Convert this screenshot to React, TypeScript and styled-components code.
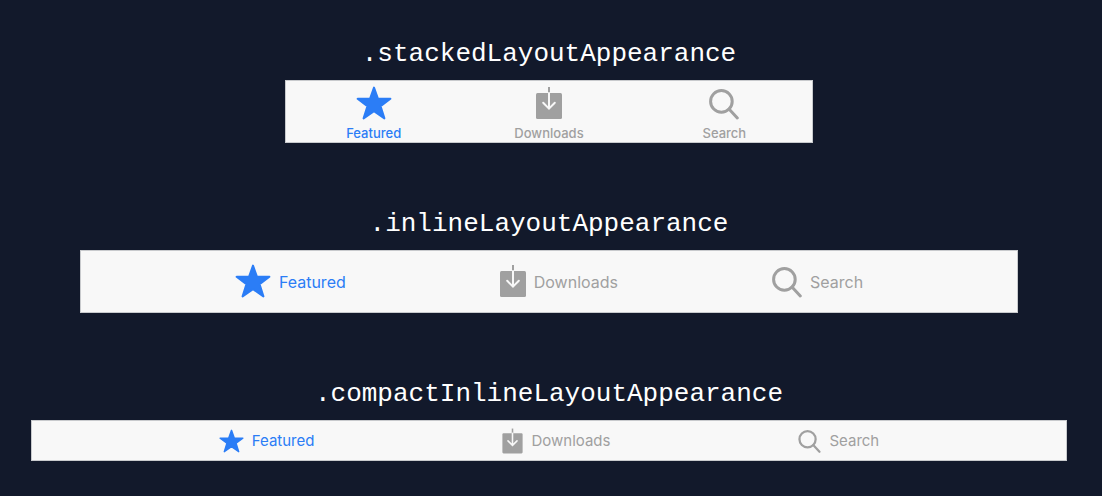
import React from "react";
import styled, { createGlobalStyle } from "styled-components";

type Variant = "stacked" | "inline" | "compact";

const GlobalStyle = createGlobalStyle`
  body {
    margin: 0;
    background: #12192b;
  }
`;

const Page = styled.main`
  display: flex;
  flex-direction: column;
  gap: 61px;
  padding: 34px 35px 35px 31px;
`;

const Section = styled.section`
  display: flex;
  flex-direction: column;
  align-items: center;
  gap: 6px;
`;

const Heading = styled.h2`
  margin: 0;
  color: #ffffff;
  font: 400 26px/40px "Liberation Mono", monospace;
`;

const barWidths = { stacked: 528, inline: 938, compact: 1036 };
const itemGaps = { stacked: 0, inline: 154, compact: 188 };

const TabBar = styled.nav<{ $variant: Variant }>`
  box-sizing: border-box;
  display: flex;
  justify-content: center;
  gap: ${(p) => itemGaps[p.$variant]}px;
  width: 100%;
  max-width: ${(p) => barWidths[p.$variant]}px;
  min-height: ${(p) => (p.$variant === "compact" ? 41 : 63)}px;
  border: 1px solid #c8cacd;
  background: #f8f8f8;
`;

const labelFonts = {
  stacked: '500 13px/16px Inter, sans-serif',
  inline: '400 16px/20px Inter, sans-serif',
  compact: '400 15px/20px Inter, sans-serif',
};

const Tab = styled.button<{ $variant: Variant; $active: boolean }>`
  display: flex;
  flex: ${(p) => (p.$variant === "stacked" ? "1" : "none")};
  flex-direction: ${(p) => (p.$variant === "stacked" ? "column" : "row")};
  align-items: center;
  justify-content: center;
  gap: ${(p) => (p.$variant === "stacked" ? 4 : 8)}px;
  padding: ${(p) => (p.$variant === "stacked" ? "2px 0 0" : "0")};
  border: 0;
  background: none;
  color: ${(p) => (p.$active ? "#2b7df6" : "#a0a0a0")};
  font: ${(p) => labelFonts[p.$variant]};
  cursor: pointer;

  svg {
    margin-bottom: ${(p) => (p.$variant === "inline" ? 2 : 0)}px;
  }
`;

const Icon = styled.svg`
  flex: none;
  display: block;
`;

const StarIcon = ({ compact }: { compact: boolean }) => (
  <Icon width={compact ? 25 : 36} height={compact ? 26 : 36} viewBox="0 0 36 36" aria-hidden="true">
    <path
      d="M18 2.6L22 13.8H34.4L24.6 21.2L28.4 33.4L18 26.2L7.6 33.4L11.4 21.2L1.6 13.8H14Z"
      fill="currentColor"
      stroke="currentColor"
      strokeWidth="2"
      strokeLinejoin="round"
    />
  </Icon>
);

const DownloadIcon = ({ compact }: { compact: boolean }) => (
  <Icon width={compact ? 21 : 26} height={compact ? 28 : 36} viewBox="0 0 26 36" aria-hidden="true">
    <rect y="8" width="26" height="26" rx="1.5" fill="currentColor" />
    <path d="M13 2V8" stroke="currentColor" strokeWidth="2" />
    <path
      d="M13 8V23M7.2 17.8L13 23.6L18.8 17.8"
      fill="none"
      stroke="#f8f8f8"
      strokeWidth="2"
      strokeLinecap="round"
    />
  </Icon>
);

const SearchIcon = ({ compact }: { compact: boolean }) => (
  <Icon width={compact ? 23 : 30} height={compact ? 27 : 36} viewBox="0 0 30 36" aria-hidden="true">
    <circle cx="12.4" cy="16.4" r="10.8" fill="none" stroke="currentColor" strokeWidth="3" />
    <path d="M20 24L28.3 33" stroke="currentColor" strokeWidth="3" strokeLinecap="round" />
  </Icon>
);

const tabs = [
  { label: "Featured", Glyph: StarIcon },
  { label: "Downloads", Glyph: DownloadIcon },
  { label: "Search", Glyph: SearchIcon },
];

const sections: { title: string; variant: Variant }[] = [
  { title: ".stackedLayoutAppearance", variant: "stacked" },
  { title: ".inlineLayoutAppearance", variant: "inline" },
  { title: ".compactInlineLayoutAppearance", variant: "compact" },
];

export default function App() {
  return (
    <>
      <GlobalStyle />
      <Page>
        {sections.map(({ title, variant }) => (
          <Section key={variant}>
            <Heading>{title}</Heading>
            <TabBar $variant={variant} aria-label={title}>
              {tabs.map(({ label, Glyph }, index) => (
                <Tab key={label} type="button" $variant={variant} $active={index === 0}>
                  <Glyph compact={variant === "compact"} />
                  <span>{label}</span>
                </Tab>
              ))}
            </TabBar>
          </Section>
        ))}
      </Page>
    </>
  );
}
